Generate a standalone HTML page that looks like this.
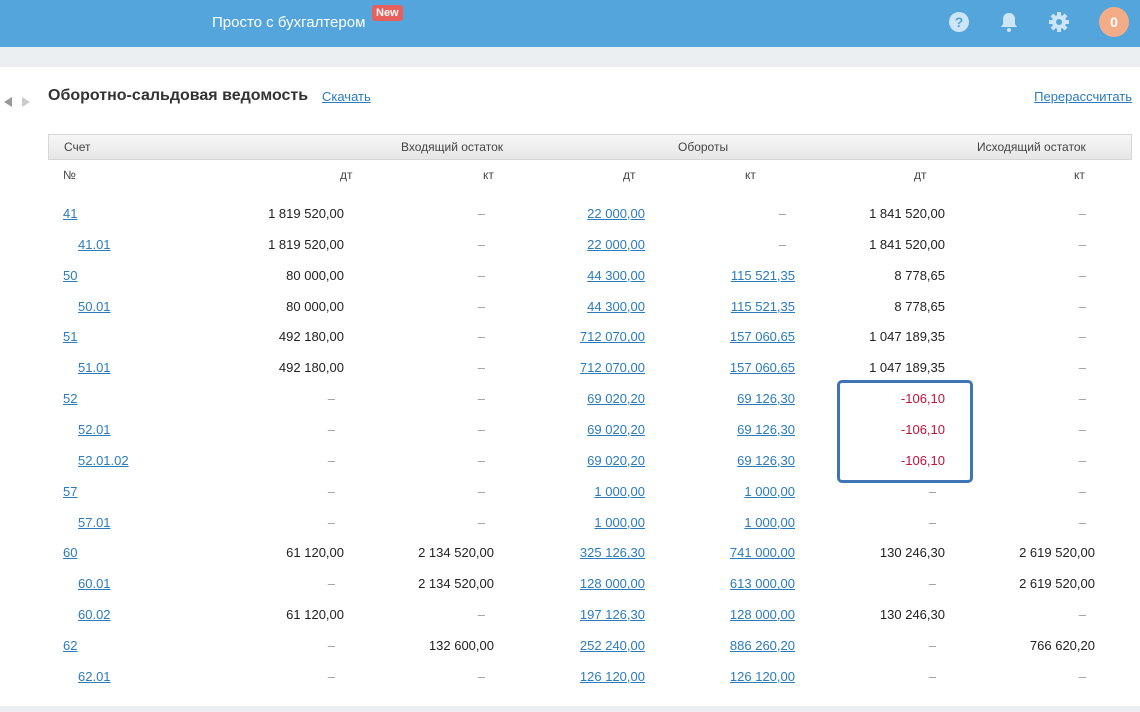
<!DOCTYPE html>
<html><head><meta charset="utf-8">
<style>
*{margin:0;padding:0;box-sizing:border-box}
body{width:1140px;height:712px;background:#fff;font-family:"Liberation Sans",Arial,sans-serif;font-size:13px;color:#222;position:relative;overflow:hidden}
.top{position:absolute;left:0;top:0;width:1140px;height:47px;background:#53a5dc}
.band{position:absolute;left:0;top:47px;width:1140px;height:20px;background:#ebeff2}
.bot{position:absolute;left:0;top:706px;width:1140px;height:6px;background:#ebeff2}
.brand{position:absolute;left:212px;top:14px;color:#fff;font-size:15px}
.new{position:absolute;left:372px;top:5px;background:#e8605c;color:#fff;font-size:11px;font-weight:bold;padding:2px 4px;border-radius:3px}
.av{position:absolute;left:1099px;top:7px;width:30px;height:30px;border-radius:50%;background:#f2ad88;color:#fff;font-weight:bold;font-size:14px;text-align:center;line-height:30px}
h1{position:absolute;left:48px;top:87px;font-size:16px;font-weight:bold;color:#333}
a{color:#2b7bbd;text-decoration:underline}
.dl{position:absolute;left:322px;top:89px}
.rc{position:absolute;right:8px;top:89px}
.thd{position:absolute;left:48px;top:134px;width:1084px;height:26px;border:1px solid #d6d6d6;background:linear-gradient(#f6f6f6,#e6e6e6);font-size:12px;color:#444}
.thd span{position:absolute;top:5px}
.sh{position:absolute;top:168px;font-size:12px;color:#444}
table{position:absolute;left:48px;top:198px;border-collapse:collapse;table-layout:fixed;width:1084px}
td{padding:0;text-align:right;height:30.87px;white-space:nowrap}
td:first-child{text-align:left;padding-left:15px}
.d{color:#999;padding-right:9px}
.sub{padding-left:30px!important}
.neg{color:#c2123a}
.box{position:absolute;left:837px;top:380px;width:136px;height:103px;border:3px solid #3f74b5;border-radius:5px}
.tri{position:absolute;top:97px;width:0;height:0;border-top:5px solid transparent;border-bottom:5px solid transparent}
</style></head><body>
<div class="top"></div>
<div class="brand">Просто с бухгалтером</div>
<div class="new">New</div>
<svg style="position:absolute;left:948px;top:11px" width="22" height="22" viewBox="0 0 22 22"><circle cx="11" cy="11" r="10" fill="#cde5f7"/><text x="11" y="16" text-anchor="middle" font-family="Liberation Sans" font-weight="bold" font-size="14" fill="#53a5dc">?</text></svg>
<svg style="position:absolute;left:999px;top:11px" width="20" height="22" viewBox="0 0 20 22"><path d="M10 2c-4 0-6 3-6 6v5l-2 3h16l-2-3V8c0-3-2-6-6-6z" fill="#cde5f7"/><circle cx="10" cy="19" r="2" fill="#cde5f7"/></svg>
<svg style="position:absolute;left:1048px;top:11px" width="22" height="22" viewBox="0 0 22 22"><g fill="#cde5f7"><circle cx="11" cy="11" r="7"/><rect x="9" y="1" width="4" height="20"/><rect x="1" y="9" width="20" height="4"/><rect x="9" y="1" width="4" height="20" transform="rotate(45 11 11)"/><rect x="9" y="1" width="4" height="20" transform="rotate(-45 11 11)"/></g><circle cx="11" cy="11" r="3" fill="#53a5dc"/></svg>
<div class="av">0</div>
<div class="band"></div>
<div class="tri" style="left:4px;border-right:8px solid #999"></div>
<div class="tri" style="left:22px;border-left:8px solid #ccc"></div>
<h1>Оборотно-сальдовая ведомость</h1>
<a class="dl" href="#">Скачать</a>
<a class="rc" href="#">Перерассчитать</a>
<div class="thd"><span style="left:15px">Счет</span><span style="left:352px">Входящий остаток</span><span style="left:629px">Обороты</span><span style="left:928px">Исходящий остаток</span></div>
<div class="sh" style="left:63px">№</div>
<div class="sh" style="left:340px">дт</div>
<div class="sh" style="left:483px">кт</div>
<div class="sh" style="left:623px">дт</div>
<div class="sh" style="left:745px">кт</div>
<div class="sh" style="left:914px">дт</div>
<div class="sh" style="left:1074px">кт</div>
<table>
<colgroup><col style="width:146px"><col style="width:150px"><col style="width:150px"><col style="width:151px"><col style="width:150px"><col style="width:150px"><col style="width:150px"><col style="width:37px"></colgroup>
<tr><td><a href="#">41</a></td><td>1 819 520,00</td><td class="d">–</td><td><a href="#">22 000,00</a></td><td class="d">–</td><td>1 841 520,00</td><td class="d">–</td><td></td></tr>
<tr><td class="sub"><a href="#">41.01</a></td><td>1 819 520,00</td><td class="d">–</td><td><a href="#">22 000,00</a></td><td class="d">–</td><td>1 841 520,00</td><td class="d">–</td><td></td></tr>
<tr><td><a href="#">50</a></td><td>80 000,00</td><td class="d">–</td><td><a href="#">44 300,00</a></td><td><a href="#">115 521,35</a></td><td>8 778,65</td><td class="d">–</td><td></td></tr>
<tr><td class="sub"><a href="#">50.01</a></td><td>80 000,00</td><td class="d">–</td><td><a href="#">44 300,00</a></td><td><a href="#">115 521,35</a></td><td>8 778,65</td><td class="d">–</td><td></td></tr>
<tr><td><a href="#">51</a></td><td>492 180,00</td><td class="d">–</td><td><a href="#">712 070,00</a></td><td><a href="#">157 060,65</a></td><td>1 047 189,35</td><td class="d">–</td><td></td></tr>
<tr><td class="sub"><a href="#">51.01</a></td><td>492 180,00</td><td class="d">–</td><td><a href="#">712 070,00</a></td><td><a href="#">157 060,65</a></td><td>1 047 189,35</td><td class="d">–</td><td></td></tr>
<tr><td><a href="#">52</a></td><td class="d">–</td><td class="d">–</td><td><a href="#">69 020,20</a></td><td><a href="#">69 126,30</a></td><td class="neg">-106,10</td><td class="d">–</td><td></td></tr>
<tr><td class="sub"><a href="#">52.01</a></td><td class="d">–</td><td class="d">–</td><td><a href="#">69 020,20</a></td><td><a href="#">69 126,30</a></td><td class="neg">-106,10</td><td class="d">–</td><td></td></tr>
<tr><td class="sub"><a href="#">52.01.02</a></td><td class="d">–</td><td class="d">–</td><td><a href="#">69 020,20</a></td><td><a href="#">69 126,30</a></td><td class="neg">-106,10</td><td class="d">–</td><td></td></tr>
<tr><td><a href="#">57</a></td><td class="d">–</td><td class="d">–</td><td><a href="#">1 000,00</a></td><td><a href="#">1 000,00</a></td><td class="d">–</td><td class="d">–</td><td></td></tr>
<tr><td class="sub"><a href="#">57.01</a></td><td class="d">–</td><td class="d">–</td><td><a href="#">1 000,00</a></td><td><a href="#">1 000,00</a></td><td class="d">–</td><td class="d">–</td><td></td></tr>
<tr><td><a href="#">60</a></td><td>61 120,00</td><td>2 134 520,00</td><td><a href="#">325 126,30</a></td><td><a href="#">741 000,00</a></td><td>130 246,30</td><td>2 619 520,00</td><td></td></tr>
<tr><td class="sub"><a href="#">60.01</a></td><td class="d">–</td><td>2 134 520,00</td><td><a href="#">128 000,00</a></td><td><a href="#">613 000,00</a></td><td class="d">–</td><td>2 619 520,00</td><td></td></tr>
<tr><td class="sub"><a href="#">60.02</a></td><td>61 120,00</td><td class="d">–</td><td><a href="#">197 126,30</a></td><td><a href="#">128 000,00</a></td><td>130 246,30</td><td class="d">–</td><td></td></tr>
<tr><td><a href="#">62</a></td><td class="d">–</td><td>132 600,00</td><td><a href="#">252 240,00</a></td><td><a href="#">886 260,20</a></td><td class="d">–</td><td>766 620,20</td><td></td></tr>
<tr><td class="sub"><a href="#">62.01</a></td><td class="d">–</td><td class="d">–</td><td><a href="#">126 120,00</a></td><td><a href="#">126 120,00</a></td><td class="d">–</td><td class="d">–</td><td></td></tr>
</table>
<div class="box"></div>
<div class="bot"></div>
</body></html>
